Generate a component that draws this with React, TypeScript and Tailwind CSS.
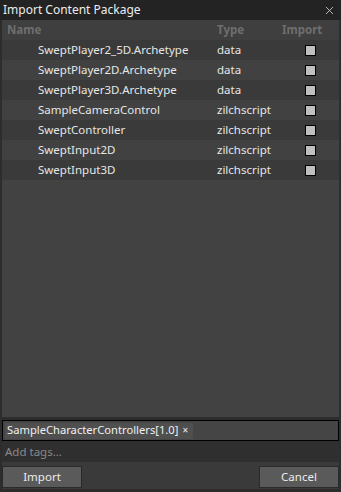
import { X } from "lucide-react";

const rows = [
  { name: "SweptPlayer2_5D.Archetype", type: "data" },
  { name: "SweptPlayer2D.Archetype", type: "data" },
  { name: "SweptPlayer3D.Archetype", type: "data" },
  { name: "SampleCameraControl", type: "zilchscript" },
  { name: "SweptController", type: "zilchscript" },
  { name: "SweptInput2D", type: "zilchscript" },
  { name: "SweptInput3D", type: "zilchscript" },
];

export default function App() {
  return (
    <div
      className="w-[341px] h-[492px] flex flex-col bg-[#2b2b2b] text-[#e6e6e6] text-[11.5px] overflow-hidden"
      style={{ fontFamily: '"Noto Sans", "Open Sans", sans-serif' }}
    >
      {/* title bar */}
      <div className="h-[20px] shrink-0 flex items-center justify-between pl-[3px] pr-[5px] bg-[#232323]">
        <span className="text-[12px] text-[#ececec]">Import Content Package</span>
        <X className="w-[13px] h-[13px] text-[#d8d8d8]" strokeWidth={1.5} />
      </div>

      <div className="flex-1 flex flex-col px-[2px] pb-[3px] bg-[#2d2d2d]">
        {/* table */}
        <div className="flex-1 flex flex-col bg-[#424242]">
          <div className="h-[20px] shrink-0 flex items-center bg-[#3f3f3f] font-bold text-[#6e6e6e]">
            <span className="w-[215px] pl-[5px]">Name</span>
            <span className="w-[65px]">Type</span>
            <span>Import</span>
          </div>
          {rows.map((r, i) => (
            <div
              key={r.name}
              className={
                "h-[20px] shrink-0 flex items-center " +
                (i % 2 === 0 ? "bg-[#3a3a3a]" : "bg-[#414141]")
              }
            >
              <span className="w-[215px] pl-[36px]">{r.name}</span>
              <span className="w-[88px]">{r.type}</span>
              <span className="w-[9px] h-[9px] border border-black bg-[#c0c0c0] box-content" />
            </div>
          ))}
        </div>

        {/* tags */}
        <div className="mt-[3px] h-[21px] shrink-0 flex items-center px-[2px] border border-black bg-[#454545]">
          <span className="h-[16px] flex items-center pl-[2px] pr-[5px] bg-[#4f4f4f] text-[11.2px] text-[#f0f0f0]">
            SampleCharacterControllers[1.0]
            <span className="ml-[4px] text-[10px]">×</span>
          </span>
        </div>
        <div className="h-[21px] shrink-0 flex items-center pl-[3px] bg-[#2f2f2f] text-[#8a8a8a]">
          Add tags...
        </div>

        {/* buttons */}
        <div className="h-[27px] shrink-0 flex items-start justify-between pt-[4px] bg-[#3a3a3a]">
          <button className="w-[80px] h-[22px] border border-[#2a2a2a] bg-[#5a5a5a] text-[#ececec]">
            Import
          </button>
          <button className="w-[80px] h-[22px] border border-[#2a2a2a] bg-[#5a5a5a] text-[#ececec]">
            Cancel
          </button>
        </div>
      </div>
    </div>
  );
}
